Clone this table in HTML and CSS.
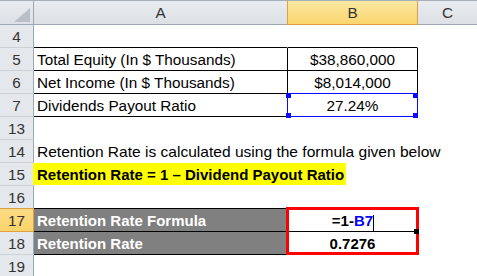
FILE: index.html
```html
<!DOCTYPE html>
<html>
<head>
<meta charset="utf-8">
<link rel="stylesheet" href="styles.css">
</head>
<body>
<div class="sheet">
  <div class="grid">
    <div class="ch corner"><svg class="tri" width="16" height="14" viewBox="0 0 16 14"><polygon points="16,0 16,14 0,14" fill="#b9bfc6"/></svg></div>
    <div class="ch">A</div>
    <div class="ch ch-sel">B</div>
    <div class="ch ch-last">C</div>

    <div class="rh">4</div><div class="c bb"></div><div class="c bb"></div><div class="c"></div>

    <div class="rh">5</div><div class="c bb br txt">Total Equity (In $ Thousands)</div><div class="c bb br num">$38,860,000</div><div class="c"></div>

    <div class="rh">6</div><div class="c bb br txt">Net Income (In $ Thousands)</div><div class="c bb br num">$8,014,000</div><div class="c"></div>

    <div class="rh">7</div><div class="c bb br txt">Dividends Payout Ratio</div><div class="c bb br num">27.24%</div><div class="c"></div>

    <div class="rh">13</div><div class="c"></div><div class="c"></div><div class="c"></div>

    <div class="rh">14</div><div class="c txt overflow wide">Retention Rate is calculated using the formula given below</div><div class="c"></div><div class="c"></div>

    <div class="rh">15</div><div class="c overflow"><span class="hl">Retention Rate = 1 – Dividend Payout Ratio</span></div><div class="c"></div><div class="c"></div>

    <div class="rh">16</div><div class="c bb"></div><div class="c bb"></div><div class="c"></div>

    <div class="rh rh-sel">17</div><div class="c bb br txt dark">Retention Rate Formula</div><div class="c bb br num bold">=1-<span class="ref">B7</span></div><div class="c"></div>

    <div class="rh">18</div><div class="c bb br txt dark">Retention Rate</div><div class="c bb br num bold">0.7276</div><div class="c"></div>

    <div class="rh">19</div><div class="c"></div><div class="c"></div><div class="c"></div>
  </div>

  <div class="selbox">
    <span class="h h-tl"></span><span class="h h-tr"></span><span class="h h-bl"></span><span class="h h-br"></span>
  </div>
  <div class="redbox"></div>
  <div class="caret"></div>
  <div class="fill"></div>
</div>
</body>
</html>
```

FILE: styles.css
```css
html, body {
  margin: 0;
  padding: 0;
  background: #fff;
}

.sheet {
  position: relative;
  width: 477px;
  height: 276px;
  overflow: hidden;
  font-family: "Liberation Sans", Arial, sans-serif;
  font-size: 15.3px;
  color: #000;
}

.grid {
  display: grid;
  grid-template-columns: 34px 254px 130px 59px;
  grid-template-rows: 25px repeat(11, 23px);
}

.ch {
  box-sizing: border-box;
  background: linear-gradient(#e8ebef, #dde1e6);
  border-top: 1px solid #a7afb9;
  border-bottom: 1px solid #9ea8b4;
  border-right: 1px solid #c3c9d0;
  color: #333;
  display: flex;
  align-items: center;
  justify-content: center;
  line-height: 1;
}

.corner {
  position: relative;
  border-right-color: #9ea8b4;
}

.tri {
  position: absolute;
  right: 3px;
  bottom: 2px;
}

.ch-sel {
  background: linear-gradient(#fde9a4, #f9d56d);
  border-bottom-color: #e0a03e;
  border-right-color: #e0a03e;
  border-left: 1px solid #e0a03e;
  margin-left: -1px;
}

.ch-last {
  border-right: none;
}

.rh {
  box-sizing: border-box;
  background: #e4e7eb;
  border-right: 1px solid #9ea8b4;
  border-bottom: 1px solid #cdd2d8;
  color: #333;
  display: flex;
  align-items: center;
  justify-content: center;
  padding-top: 1px;
}

.rh-sel {
  background: linear-gradient(#fddc85, #f9d36b);
  border-right-color: #e0a03e;
  border-bottom-color: #e0a03e;
  border-top: 1px solid #e0a03e;
  margin-top: -1px;
}

.c {
  box-sizing: border-box;
  border-right: 1px solid transparent;
  border-bottom: 1px solid transparent;
  display: flex;
  align-items: center;
  white-space: nowrap;
  padding-top: 1px;
}

.bb { border-bottom-color: #000; }
.br { border-right-color: #000; }

.txt { padding-left: 3px; }

.wide { font-size: 15.55px; }

.overflow {
  overflow: visible;
  position: relative;
  z-index: 1;
}

.num {
  justify-content: center;
}

.bold {
  font-weight: bold;
  font-size: 15px;
}

.dark {
  background: #808080;
  color: #fff;
  font-weight: bold;
  font-size: 15px;
}

.hl {
  display: flex;
  align-items: center;
  align-self: stretch;
  flex: none;
  background: #ffff00;
  font-weight: bold;
  font-size: 15px;
  margin-top: -1px;
  margin-left: -1px;
  padding: 0 2px 0 4px;
}

.ref { color: #0000ff; }

.selbox {
  position: absolute;
  left: 287px;
  top: 93px;
  width: 131px;
  height: 24px;
  box-sizing: border-box;
  border: 1px solid #0a0aff;
}

.h {
  position: absolute;
  width: 5px;
  height: 5px;
  background: #0a0aff;
}
.h-tl { left: -2px; top: -1px; }
.h-tr { right: -1px; top: -1px; }
.h-bl { left: -2px; bottom: -2px; }
.h-br { right: -1px; bottom: -2px; }

.redbox {
  position: absolute;
  left: 286px;
  top: 207px;
  width: 133px;
  height: 48px;
  box-sizing: border-box;
  border: 3px solid #ff0000;
  z-index: 2;
}

.caret {
  position: absolute;
  left: 373px;
  top: 215px;
  width: 1px;
  height: 16px;
  background: #000;
  z-index: 3;
}

.fill {
  position: absolute;
  left: 414px;
  top: 229px;
  width: 5px;
  height: 5px;
  background: #000;
  z-index: 3;
}
```
